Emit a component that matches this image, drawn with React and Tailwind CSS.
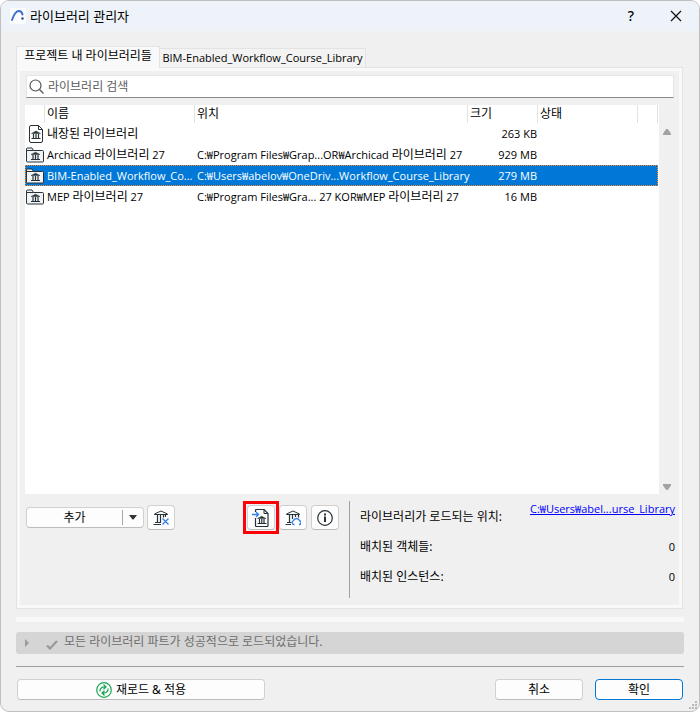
import React, { useState } from 'react';

const libraries = [
  { id: 'embedded', kind: 'file', name: '내장된 라이브러리', location: '', size: '263 KB' },
  { id: 'archicad', kind: 'folder', name: 'Archicad 라이브러리 27', location: 'C:₩Program Files₩Grap...OR₩Archicad 라이브러리 27', size: '929 MB' },
  { id: 'bim', kind: 'folder', name: 'BIM-Enabled_Workflow_Co...', location: 'C:₩Users₩abelov₩OneDriv...Workflow_Course_Library', size: '279 MB' },
  { id: 'mep', kind: 'folder', name: 'MEP 라이브러리 27', location: 'C:₩Program Files₩Gra... 27 KOR₩MEP 라이브러리 27', size: '16 MB' },
];

// Latin runs look too large next to Hangul at the same size, so they get their own font
function Label({ text }) {
  return text.split(/([가-힣]+)/).map((run, i) =>
    i % 2 === 1 ? run : <span key={i} className="font-['Open_Sans','Noto_Sans_CJK_KR',sans-serif] text-[11px] whitespace-pre">{run}</span>
  );
}

function AppLogo() {
  return (
    <svg className="w-4 h-4" viewBox="0 0 16 16" fill="none" aria-hidden="true">
      <rect width="16" height="16" rx="1" fill="#fbfcfe" />
      <path d="M2 12C4 6 6.500 3 9 3c2 0 3 1.200 3.500 3.500" stroke="#3f6fd0" strokeWidth="2" strokeLinecap="round" />
      <circle cx="12.500" cy="10.500" r="1.200" fill="#27439c" />
    </svg>
  );
}

function FileIcon() {
  return (
    <svg className="ml-1 w-[14px] h-[18px]" viewBox="0 0 14 18" fill="none" stroke="#263238" aria-hidden="true">
      <path d="M.5 2Q.5.5 2 .5h7.500l4 4V16q0 1.500-1.500 1.500H2Q.5 17.500.5 16z" fill="#fff" />
      <path d="M9.500.5v4h4" />
      <path d="M2.500 8.500 7 6l4.500 2.500z" fill="#263238" strokeWidth=".5" />
      <path d="M4.500 9v4M7 9v4M9.500 9v4" strokeWidth="1.200" />
      <path d="M2.500 13.500h9" />
    </svg>
  );
}

function FolderIcon() {
  return (
    <svg className="ml-px w-[18px] h-[16px]" viewBox="0 0 18 16" fill="none" stroke="#263238" aria-hidden="true">
      <path d="M.5 14V2Q.5 1 1.500 1H6l1.500 2.500h9q1 0 1 1V14q0 1-1 1h-15q-1 0-1-1z" fill="#f2f3f4" />
      <path d="M.5 3.500h7" />
      <path d="M5 7.500 9.500 5.200 14 7.500z" fill="#263238" strokeWidth=".5" />
      <path d="M7 8v4M9.500 8v4M12 8v4" strokeWidth="1.200" />
      <path d="M5 12.500h9" />
    </svg>
  );
}

function RemoveLibraryIcon() {
  return (
    <svg className="w-4 h-4" viewBox="0 0 16 16" fill="none" stroke="#263238" aria-hidden="true">
      <path d="M1.500 4 8 1l6.500 3v.5h-13z" />
      <path d="M4.500 5v8M7.500 5v8M10.500 5v2.500M12.500 5v2" strokeWidth="1.200" />
      <path d="M2 12.500h6M.5 14.500H8" />
      <path d="m9.500 8.500 6 6M15.500 8.500l-6 6" stroke="#2f7fe8" strokeWidth="1.300" />
    </svg>
  );
}

function ImportLibraryIcon() {
  return (
    <svg className="w-[18px] h-[18px]" viewBox="0 0 18 18" fill="none" stroke="#263238" aria-hidden="true">
      <path d="M3.500 3V1.500q0-1 1-1H12l4 4v12q0 1-1 1H4.500q-1 0-1-1V9" strokeWidth="1.200" />
      <path d="M12 .5v4h4" />
      <path d="M5.500 9.500 9.700 7.300l4.300 2.200z" fill="#263238" strokeWidth=".5" />
      <path d="M7.500 10v4M9.800 10v4M12 10v4" strokeWidth="1.200" />
      <path d="M5.500 14.500h9" />
      <path d="M0 5.500h6M4 3l2.500 2.500L4 8" stroke="#2f7fe8" strokeWidth="1.300" />
    </svg>
  );
}

function ReloadLibraryIcon() {
  return (
    <svg className="w-4 h-4" viewBox="0 0 16 16" fill="none" stroke="#263238" aria-hidden="true">
      <path d="M1.500 4 8 1l6.500 3v.5h-13z" />
      <path d="M4.500 5v8M7.500 5v4M10.500 5v2M13.500 5v2.500" strokeWidth="1.200" />
      <path d="M2 12.500h4.500M.5 14.500H6" />
      <path d="M9.500 14.500H9a2 2 0 0 1-.5-3.900 3.200 3.200 0 0 1 6 0 2 2 0 0 1 0 3.900H14" stroke="#2f7fe8" strokeWidth="1.300" />
    </svg>
  );
}

function InfoIcon() {
  return (
    <svg className="w-4 h-4" viewBox="0 0 16 16" fill="none" stroke="#263238" aria-hidden="true">
      <circle cx="8" cy="8" r="7.300" strokeWidth="1.200" />
      <path d="M8 6.500V12" strokeWidth="2" />
      <path d="M8 3.500v2" strokeWidth="2" />
    </svg>
  );
}

function ReloadIcon() {
  return (
    <svg className="w-4 h-4" viewBox="0 0 16 16" fill="none" stroke="#14a650" strokeWidth="1.200" aria-hidden="true">
      <circle cx="8" cy="8" r="7.300" />
      <path d="M4 9.500C3.500 6.500 6 4.500 9.500 5M7.500 2.500 10 5 7.500 7.300" />
      <path d="M12 6.500c.5 3-2 5-5.500 4.500M8.500 8.700 6 11l2.500 2.500" />
    </svg>
  );
}

function IconButton({ label, children }) {
  return (
    <button
      type="button"
      aria-label={label}
      className="w-7 h-[25px] flex items-center justify-center rounded-[4px] border border-[#d0d0d0] border-b-[#bcbcbc] bg-[#fdfdfd]"
    >
      {children}
    </button>
  );
}

function TitleBar() {
  return (
    <header className="h-[30px] shrink-0 flex items-center gap-1 pl-[9px] pr-[15px] bg-[#eef3f9]">
      <AppLogo />
      <h1 className="flex-1 text-[13px] leading-4">라이브러리 관리자</h1>
      <button type="button" aria-label="도움말" className="w-5 mr-[23px] text-[14px] leading-4 font-medium">?</button>
      <button type="button" aria-label="닫기" className="w-4 h-4 flex items-center justify-center">
        <svg className="w-3 h-3" viewBox="0 0 12 12" fill="none" stroke="#111" strokeWidth="1.200" aria-hidden="true">
          <path d="m1 1 10 10M11 1 1 11" />
        </svg>
      </button>
    </header>
  );
}

function LibraryTable({ selected, onSelect }) {
  return (
    <div className="flex-1 flex mt-[7px]">
      <div className="flex-1 bg-white pr-px">
        <table className="w-full table-fixed border-collapse text-left whitespace-nowrap">
          <colgroup>
            <col className="w-5" />
            <col className="w-[150px]" />
            <col />
            <col className="w-[70px]" />
            <col className="w-[100px]" />
            <col className="w-5" />
          </colgroup>
          <thead>
            <tr className="h-[18px] [&>th]:p-0 [&>th]:pl-[2px] [&>th]:font-normal [&>th]:shadow-[inset_-1px_0_#e2e2e2]">
              <th></th>
              <th>이름</th>
              <th>위치</th>
              <th>크기</th>
              <th>상태</th>
              <th></th>
            </tr>
          </thead>
          <tbody>
            {libraries.map((lib) => (
              <tr
                key={lib.id}
                onClick={() => onSelect(lib.id)}
                className={`h-[21px] [&>td]:p-0 ${
                  lib.id === selected
                    ? 'bg-[#0078d7] text-white outline-1 -outline-offset-1 outline-dotted outline-[#ff8728]'
                    : ''
                }`}
              >
                <td>{lib.kind === 'file' ? <FileIcon /> : <FolderIcon />}</td>
                <td><div className="pl-[2px]"><Label text={lib.name} /></div></td>
                <td><div className="pl-[2px]"><Label text={lib.location} /></div></td>
                <td><div className="pr-px text-right"><Label text={lib.size} /></div></td>
                <td></td>
                <td></td>
              </tr>
            ))}
          </tbody>
        </table>
      </div>
      {/* Scrollbar arrows */}
      <div className="w-4 shrink-0 flex flex-col items-center justify-between pt-6 pb-1 text-[#a3a3a3]">
        <svg className="w-[8px] h-[6px]" viewBox="0 0 8 6" fill="currentColor" aria-hidden="true">
          <path d="M3.200 0h1.600L8 4.500V6H0V4.500z" />
        </svg>
        <svg className="w-[8px] h-[6px]" viewBox="0 0 8 6" fill="currentColor" aria-hidden="true">
          <path d="M3.200 6h1.600L8 1.500V0H0v1.500z" />
        </svg>
      </div>
    </div>
  );
}

function Toolbar() {
  return (
    <div className="flex-1 flex items-start pt-1 pl-px pr-[10px]">
      <div className="mt-[2px] h-[21px] w-[118px] flex items-center rounded-[4px] border border-[#d0d0d0] border-b-[#bcbcbc] bg-[#fdfdfd]">
        <button type="button" className="flex-1">추가</button>
        <span className="w-px h-[15px] bg-[#a8a8a8]"></span>
        <button type="button" aria-label="추가 옵션" className="w-5 h-full flex items-center justify-center">
          <svg className="w-[8px] h-[5px]" viewBox="0 0 8 5" fill="#333" aria-hidden="true">
            <path d="M0 0h8L4.500 4.500h-1z" />
          </svg>
        </button>
      </div>
      <div className="ml-[3px]">
        <IconButton label="라이브러리 제거"><RemoveLibraryIcon /></IconButton>
      </div>
      <div className="ml-auto flex items-start gap-1">
        <div className="relative">
          <IconButton label="라이브러리 내장"><ImportLibraryIcon /></IconButton>
          <span className="absolute -inset-1 border-[3px] border-[#fb0007] pointer-events-none"></span>
        </div>
        <IconButton label="라이브러리 다시 연결"><ReloadLibraryIcon /></IconButton>
        <IconButton label="정보"><InfoIcon /></IconButton>
      </div>
    </div>
  );
}

function LibraryInfo() {
  return (
    <dl className="w-[326px] h-[97px] border-l border-[#a0a0a0] pl-[10px] leading-4">
      <div className="h-[30px] flex items-start justify-between">
        <dt className="pt-2">라이브러리가 로드되는 위치:</dt>
        <dd><a href="#library" className="text-[#0000ff] underline"><Label text="C:₩Users₩abel...urse_Library" /></a></dd>
      </div>
      <div className="h-[30px] flex items-start justify-between pt-2">
        <dt>배치된 객체들:</dt>
        <dd><Label text="0" /></dd>
      </div>
      <div className="h-[30px] flex items-start justify-between pt-2">
        <dt>배치된 인스턴스:</dt>
        <dd><Label text="0" /></dd>
      </div>
    </dl>
  );
}

function App() {
  const [selected, setSelected] = useState('bim');
  const [query, setQuery] = useState('');

  return (
    <div className="min-h-screen flex flex-col bg-white font-['Noto_Sans','Noto_Sans_CJK_KR',sans-serif] text-[12px] leading-4 text-black">
      <div className="flex-1 flex flex-col rounded-[9px] border border-[#bfbfbf] bg-[#f0f0f0] overflow-hidden">
        <TitleBar />

        <main className="flex-1 flex flex-col px-[15px] pt-[15px]">
          {/* Tabs */}
          <div role="tablist" className="flex items-end whitespace-nowrap">
            <button
              type="button"
              role="tab"
              aria-selected="true"
              className="relative -mb-px w-36 h-[22px] pb-1 border border-b-0 border-[#e3e3e3] bg-[#f9f9f9]"
            >
              프로젝트 내 라이브러리들
            </button>
            <button
              type="button"
              role="tab"
              aria-selected="false"
              className="h-[19px] w-[206px] border border-l-0 border-b-0 border-[#e3e3e3] bg-[#f3f3f3]"
            >
              <Label text="BIM-Enabled_Workflow_Course_Library" />
            </button>
          </div>

          {/* Project libraries */}
          <section className="flex-1 flex flex-col mr-px border border-[#e3e3e3]">
            <div className="flex-1 flex flex-col border-[3px] border-[#f9f9f9] pt-1 pl-[5px] pr-1">
              <label className="h-[23px] mx-px flex items-center gap-1 pl-[2px] bg-white border border-[#e5e5e5] border-b-[#868686]">
                <svg className="w-[15px] h-[15px]" viewBox="0 0 15 15" fill="none" stroke="#555" strokeWidth="1.200" aria-hidden="true">
                  <circle cx="6.500" cy="6.500" r="5.500" />
                  <path d="m10.500 10.500 4 4" />
                </svg>
                <input
                  type="text"
                  aria-label="라이브러리 검색"
                  placeholder="라이브러리 검색"
                  value={query}
                  onChange={(e) => setQuery(e.target.value)}
                  className="flex-1 outline-none placeholder:text-[#5c5c5c]"
                />
              </label>
              <LibraryTable selected={selected} onSelect={setSelected} />
              <div className="flex pt-[7px] pb-[7px]">
                <Toolbar />
                <LibraryInfo />
              </div>
            </div>
          </section>

          {/* Load status */}
          <div className="mt-2 h-[5px] bg-[#f8f8f8]"></div>
          <div className="mt-[10px] h-[22px] flex items-center rounded-[3px] bg-[#d5d5d5] pl-[9px] text-[#6e6e6e]">
            <svg className="w-1 h-2" viewBox="0 0 4 8" fill="#9b9b9b" aria-hidden="true">
              <path d="M0 0l4 4-4 4z" />
            </svg>
            <svg className="ml-[17px] mt-1 w-3 h-[10px]" viewBox="0 0 12 10" fill="none" stroke="#999" strokeWidth="2.200" aria-hidden="true">
              <path d="M1 5.500 4 8.500 11 1" />
            </svg>
            <span className="ml-[6px] pb-[2px]">모든 라이브러리 파트가 성공적으로 로드되었습니다.</span>
          </div>
          <hr className="mt-3 border-[#9f9f9f]" />

          <footer className="flex items-center mt-3 mb-[11px] gap-3 px-px">
            <button
              type="button"
              className="h-[21px] w-[248px] mr-auto flex items-center justify-center gap-1 rounded-[4px] border border-[#d0d0d0] border-b-[#bcbcbc] bg-[#fdfdfd]"
            >
              <ReloadIcon />
              재로드 &amp; 적용
            </button>
            <button type="button" className="h-[21px] w-[88px] flex items-center justify-center rounded-[4px] border border-[#d0d0d0] border-b-[#bcbcbc] bg-[#fdfdfd]">취소</button>
            <button type="button" className="h-[21px] w-[88px] flex items-center justify-center rounded-[4px] border border-[#0078d4] bg-[#fdfdfd]">확인</button>
          </footer>
        </main>
      </div>

      {/* Resize grip */}
      <svg className="fixed right-[3px] bottom-[3px] w-2 h-2" viewBox="0 0 8 8" fill="#b8b8b8" aria-hidden="true">
        <path d="M6 0h2v2H6zM6 3h2v2H6zM6 6h2v2H6zM3 3h2v2H3zM3 6h2v2H3zM0 6h2v2H0z" />
      </svg>
    </div>
  );
}

export default App;
